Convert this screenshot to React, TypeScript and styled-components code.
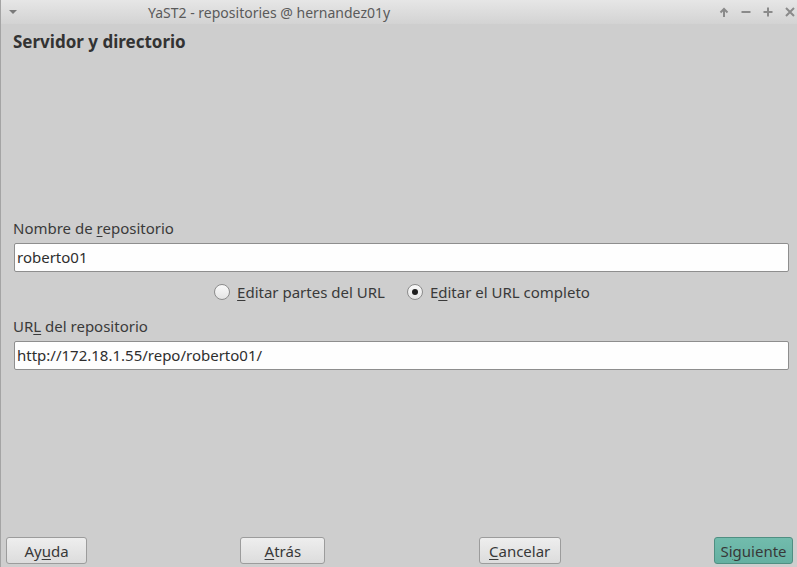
import React from "react";
import styled, { createGlobalStyle } from "styled-components";

const GlobalStyle = createGlobalStyle`
  html, body {
    margin: 0;
    padding: 0;
    background: #cecece;
  }
  body {
    font-family: "Noto Sans", "Open Sans", sans-serif;
    color: #3c3c3c;
  }
`;

const Window = styled.div`
  width: 797px;
  height: 567px;
  display: flex;
  flex-direction: column;
  background: #cecece;
  border-left: 1px solid #a4a4a4;
  box-sizing: border-box;
`;

const TitleBar = styled.header`
  height: 24px;
  flex: none;
  display: grid;
  grid-template-columns: 24px 1fr auto;
  align-items: center;
  background: linear-gradient(#e6e6e6, #d3d3d3);
  color: #5a5a5a;
  font-size: 14px;
`;

const Title = styled.span`
  padding-left: 123px;
`;

const MenuArrow = styled.span`
  justify-self: center;
  width: 0;
  height: 0;
  border-left: 4px solid transparent;
  border-right: 4px solid transparent;
  border-top: 4px solid #7a7a7a;
`;

const Controls = styled.div`
  display: flex;
  gap: 10px;
  padding-right: 1px;
`;

const Control = styled.svg`
  width: 12px;
  height: 12px;
  stroke: #8a8a8a;
  stroke-width: 2;
  fill: none;
`;

const Body = styled.main`
  flex: 1;
  display: flex;
  flex-direction: column;
  padding: 6px 8px 3px 12px;
`;

const Heading = styled.h1`
  margin: 0;
  font-size: 17px;
  font-weight: 700;
  color: #333333;
  line-height: 24px;
`;

const Spacer = styled.div`
  flex: 1;
`;

const Form = styled.section`
  display: flex;
  flex-direction: column;
  margin-bottom: 3px;
`;

const Label = styled.label`
  font-size: 15px;
  line-height: 18px;
  color: #3a3a3a;
  margin-bottom: 6px;
`;

const Mn = styled.span`
  text-decoration: underline;
  text-underline-offset: 2px;
`;

const TextInput = styled.input`
  height: 29px;
  box-sizing: border-box;
  margin: 0 0 0 1px;
  width: 775px;
  border: 1px solid #8e8e8e;
  border-radius: 2px;
  background: #fefefe;
  font-family: "Noto Sans", "Open Sans", sans-serif;
  font-size: 15px;
  color: #2e2e2e;
  padding: 0 2px;
  outline: none;
`;

const RadioRow = styled.div`
  height: 26px;
  margin: 7px 0 12px;
  display: flex;
  justify-content: center;
  align-items: center;
  gap: 22px;
  padding-left: 2px;
`;

const RadioOption = styled.label`
  display: flex;
  align-items: center;
  gap: 7px;
  font-size: 15px;
  color: #3a3a3a;
`;

const RadioCircle = styled.span<{ $checked?: boolean }>`
  width: 16px;
  height: 16px;
  box-sizing: border-box;
  border-radius: 50%;
  border: 1px solid #8c8c8c;
  background: linear-gradient(#fafafa, #e4e4e4);
  display: flex;
  align-items: center;
  justify-content: center;

  &::after {
    content: "";
    width: 6px;
    height: 6px;
    border-radius: 50%;
    background: #1e1e1e;
    display: ${(p) => (p.$checked ? "block" : "none")};
  }
`;

const ButtonBar = styled.footer`
  display: flex;
  justify-content: space-between;
  margin-left: -7px;
  margin-right: -4px;
`;

const Button = styled.button<{ $w: number; $primary?: boolean }>`
  width: ${(p) => p.$w}px;
  height: 27px;
  box-sizing: border-box;
  border-radius: 3px;
  border: 1px solid ${(p) => (p.$primary ? "#4f8f82" : "#9c9c9c")};
  background: ${(p) =>
    p.$primary
      ? "linear-gradient(#72bcad, #64b0a1)"
      : "linear-gradient(#eeeeee, #dcdcdc)"};
  font-family: "Noto Sans", "Open Sans", sans-serif;
  font-size: 15px;
  color: #383838;
  padding: 0;
`;

export default function App() {
  return (
    <>
      <GlobalStyle />
      <Window>
        <TitleBar>
          <MenuArrow />
          <Title>YaST2 - repositories @ hernandez01y</Title>
          <Controls>
            <Control viewBox="0 0 12 12">
              <path d="M6 11V3M2.5 6.5L6 3l3.5 3.5" />
            </Control>
            <Control viewBox="0 0 12 12">
              <path d="M1.5 6h9" />
            </Control>
            <Control viewBox="0 0 12 12">
              <path d="M1.5 6h9M6 1.5v9" />
            </Control>
            <Control viewBox="0 0 12 12">
              <path d="M2 2l8 8M10 2l-8 8" />
            </Control>
          </Controls>
        </TitleBar>
        <Body>
          <Heading>Servidor y directorio</Heading>
          <Spacer />
          <Form>
            <Label>
              Nombre de <Mn>r</Mn>epositorio
            </Label>
            <TextInput defaultValue="roberto01" />
            <RadioRow>
              <RadioOption>
                <RadioCircle />
                <span>
                  <Mn>E</Mn>ditar partes del URL
                </span>
              </RadioOption>
              <RadioOption>
                <RadioCircle $checked />
                <span>
                  E<Mn>d</Mn>itar el URL completo
                </span>
              </RadioOption>
            </RadioRow>
            <Label>
              UR<Mn>L</Mn> del repositorio
            </Label>
            <TextInput defaultValue="http://172.18.1.55/repo/roberto01/" />
          </Form>
          <Spacer />
          <ButtonBar>
            <Button $w={81}>
              Ay<Mn>u</Mn>da
            </Button>
            <Button $w={85}>
              <Mn>A</Mn>trás
            </Button>
            <Button $w={82}>
              <Mn>C</Mn>ancelar
            </Button>
            <Button $w={79} $primary>
              Si<Mn>g</Mn>uiente
            </Button>
          </ButtonBar>
        </Body>
      </Window>
    </>
  );
}
